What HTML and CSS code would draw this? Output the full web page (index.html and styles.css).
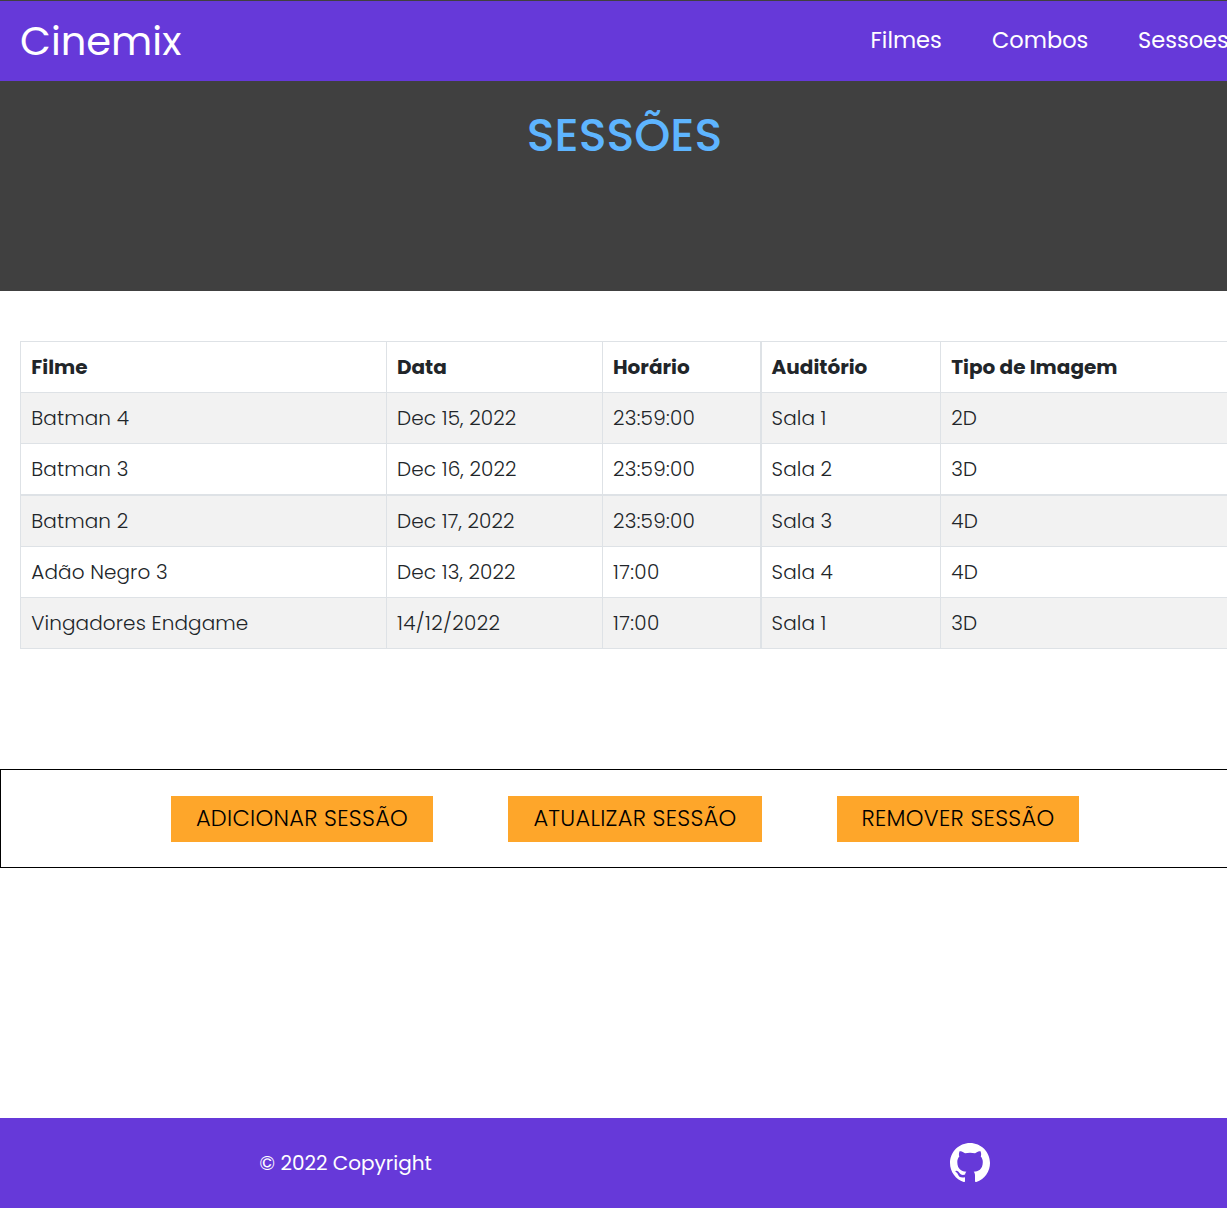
FILE: index.html
```html
<!DOCTYPE html>
<html lang="pt-BR">
<head>
<meta charset="utf-8">
<title>Cinemix</title>
<link rel="stylesheet" href="styles.css">
</head>
<body>
<div class="page">
  <header class="navbar">
    <a class="brand">Cinemix</a>
    <nav class="links"><a>Filmes</a><a>Combos</a><a>Sessoes</a></nav>
  </header>
  <section class="hero"><h1>SESSÕES</h1></section>
  <main>
    <table class="schedule">
      <thead>
        <tr><th class="film">Filme</th><th class="date">Data</th><th class="time">Horário</th><th class="room">Auditório</th><th class="format">Tipo de Imagem</th></tr>
      </thead>
      <tbody>
        <tr><td>Batman 4</td><td>Dec 15, 2022</td><td>23:59:00</td><td>Sala 1</td><td>2D</td></tr>
        <tr class="divided"><td>Batman 3</td><td>Dec 16, 2022</td><td>23:59:00</td><td>Sala 2</td><td>3D</td></tr>
        <tr><td>Batman 2</td><td>Dec 17, 2022</td><td>23:59:00</td><td>Sala 3</td><td>4D</td></tr>
        <tr><td>Adão Negro 3</td><td>Dec 13, 2022</td><td class="numeric">17:00</td><td>Sala 4</td><td>4D</td></tr>
        <tr><td>Vingadores Endgame</td><td class="numeric">14/12/2022</td><td class="numeric">17:00</td><td>Sala 1</td><td>3D</td></tr>
      </tbody>
    </table>
    <div class="actions">
      <button class="add">ADICIONAR SESSÃO</button>
      <button class="update">ATUALIZAR SESSÃO</button>
      <button class="remove">REMOVER SESSÃO</button>
    </div>
  </main>
  <footer class="footer">
    <p>© 2022 Copyright</p>
    <svg class="github" viewBox="0 0 16 16" aria-label="GitHub"><path d="M8 0C3.58 0 0 3.58 0 8c0 3.54 2.29 6.53 5.47 7.59.4.07.55-.17.55-.38 0-.19-.01-.82-.01-1.49-2.01.37-2.53-.49-2.69-.94-.09-.23-.48-.94-.82-1.13-.28-.15-.68-.52-.01-.53.63-.01 1.08.58 1.23.82.72 1.21 1.87.87 2.33.66.07-.52.28-.87.51-1.07-1.78-.2-3.64-.89-3.64-3.95 0-.87.31-1.59.82-2.15-.08-.2-.36-1.02.08-2.12 0 0 .67-.21 2.2.82.64-.18 1.32-.27 2-.27s1.36.09 2 .27c1.53-1.04 2.2-.82 2.2-.82.44 1.1.16 1.92.08 2.12.51.56.82 1.27.82 2.15 0 3.07-1.87 3.75-3.65 3.95.29.25.54.73.54 1.48 0 1.07-.01 1.93-.01 2.2 0 .21.15.46.55.38A8.01 8.01 0 0 0 16 8c0-4.42-3.58-8-8-8z"/></svg>
  </footer>
</div>
</body>
</html>
```
FILE: styles.css
```css
* { box-sizing: border-box; }
body {
  margin: 0;
  overflow: hidden;
  background: #fff;
  color: #212529;
  font-family: Poppins, Inter, "Open Sans", sans-serif;
  font-size: 20px;
  font-weight: 300;
}
.page {
  width: 1250px;
  height: 1208px;
  display: flex;
  flex-direction: column;
  border-top: 1px solid #404040;
}
.navbar {
  height: 80px;
  display: flex;
  align-items: center;
  justify-content: space-between;
  padding: 0 20px;
  background: #6639d9;
  color: #fff;
  font-weight: 400;
}
.brand { font-size: 40px; }
.links {
  display: grid;
  grid-template-columns: 121.5px 146px 92px;
  padding-bottom: 2px;
  font-size: 22.5px;
}
.hero { height: 210px; background: #404040; padding-top: 20px; }
h1 {
  margin: 0;
  padding-right: 1px;
  text-align: center;
  color: #5eb5ff;
  font-size: 46px;
  line-height: 68px;
  font-weight: 500;
}
main { flex: 1; padding-top: 50px; }
.schedule {
  width: 1211px;
  margin-left: 20px;
  table-layout: fixed;
  border-collapse: separate;
  border-spacing: 0;
  border-top: 1px solid #dee2e6;
  border-left: 1px solid #dee2e6;
}
.schedule th, .schedule td {
  height: 51px;
  padding: 0 10px;
  text-align: left;
  line-height: 30px;
  border-right: 1px solid #dee2e6;
  border-bottom: 1px solid #dee2e6;
}
.schedule th { font-weight: 700; }
.schedule td { letter-spacing: 0.1px; }
.schedule td:nth-child(3) { letter-spacing: 0.25px; }
.schedule td.numeric { letter-spacing: 0.36px; }
.schedule th:first-child, .schedule td:first-child,
.schedule th:last-child, .schedule td:last-child { padding-left: 10.3px; }
.schedule th:nth-child(4), .schedule td:nth-child(4) { padding-left: 9.6px; }
.film { width: 366px; }
.date { width: 216px; }
.time { width: 159px; }
.room { width: 179px; }
.schedule th:nth-child(3), .schedule td:nth-child(3) { border-right-width: 2px; }
.schedule .divided td { height: 52px; border-bottom-width: 2px; }
.schedule tbody tr:nth-child(odd) { background: #f2f2f2; }
.actions {
  height: 99px;
  margin-top: 120px;
  border: 1px solid #000;
  display: flex;
  align-items: center;
  justify-content: center;
  gap: 75px;
}
button {
  height: 46px;
  padding: 0 0 2px;
  border: 0;
  background: #fea62a;
  color: #000;
  font: inherit;
  font-size: 22.5px;
  letter-spacing: 0.28px;
}
.add { width: 262px; }
.update { width: 254px; }
.remove { width: 242px; }
.footer {
  height: 90px;
  display: grid;
  grid-template-columns: 625px 624px;
  align-items: center;
  padding-left: 33px;
  background: #6639d9;
  color: #fff;
  font-weight: 400;
  text-align: center;
}
.footer p { margin: 0; }
.github { width: 40px; height: 40px; fill: #fff; justify-self: center; }
```
